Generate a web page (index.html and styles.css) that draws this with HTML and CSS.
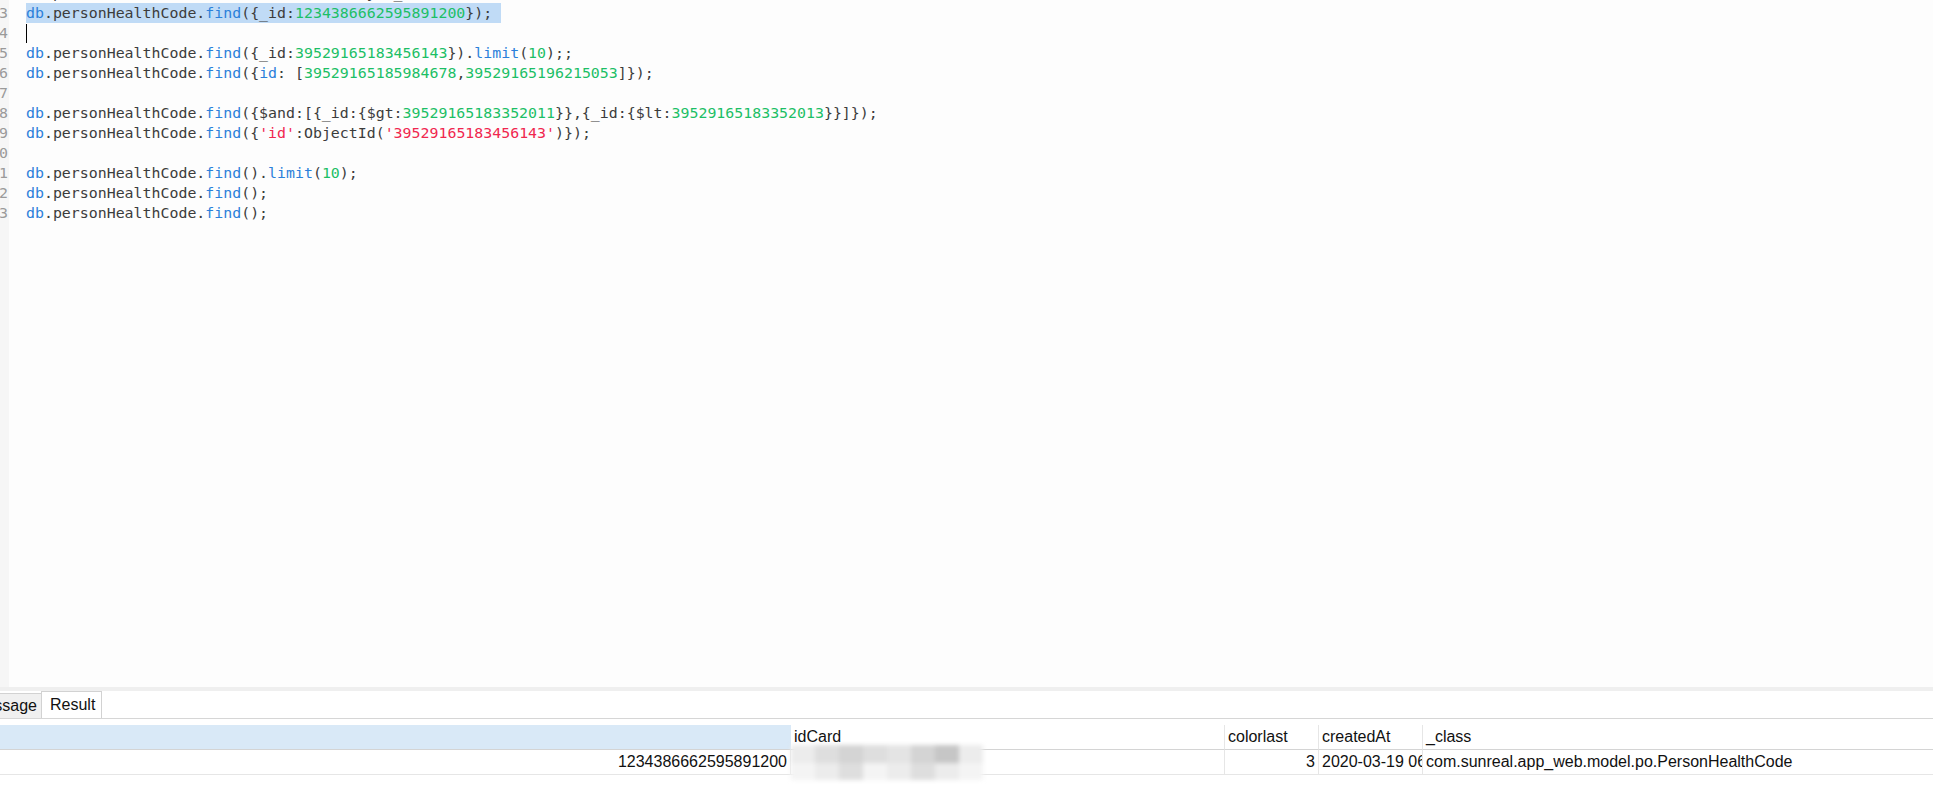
FILE: index.html
```html
<!DOCTYPE html>
<html lang="en">
<head>
  <meta charset="UTF-8" />
  <title>personHealthCode query</title>
  <link rel="stylesheet" href="styles.css">
</head>
<body>
  <div class="editor">
    <div class="gutter">
      <div>2</div><div>3</div><div>4</div><div>5</div><div>6</div><div>7</div>
      <div>8</div><div>9</div><div>10</div><div>11</div><div>12</div><div>13</div>
    </div>
    <div class="code">
      <div class="line"><span class="k">db</span>.personHealthCode.<span class="k">find</span>.remove.countBy({_id:{<span class="n">12343866</span>}});</div>
      <div class="line"><span class="sel"><span class="k">db</span>.personHealthCode.<span class="k">find</span>({_id:<span class="n">1234386662595891200</span>});</span></div>
      <div class="line"><span class="caret"></span></div>
      <div class="line"><span class="k">db</span>.personHealthCode.<span class="k">find</span>({_id:<span class="n">39529165183456143</span>}).<span class="k">limit</span>(<span class="n">10</span>);;</div>
      <div class="line"><span class="k">db</span>.personHealthCode.<span class="k">find</span>({<span class="k">id</span>: [<span class="n">39529165185984678</span>,<span class="n">39529165196215053</span>]});</div>
      <div class="line"></div>
      <div class="line"><span class="k">db</span>.personHealthCode.<span class="k">find</span>({$and:[{_id:{$gt:<span class="n">39529165183352011</span>}},{_id:{$lt:<span class="n">39529165183352013</span>}}]});</div>
      <div class="line"><span class="k">db</span>.personHealthCode.<span class="k">find</span>({<span class="s">'id'</span>:ObjectId(<span class="s">'39529165183456143'</span>)});</div>
      <div class="line"></div>
      <div class="line"><span class="k">db</span>.personHealthCode.<span class="k">find</span>().<span class="k">limit</span>(<span class="n">10</span>);</div>
      <div class="line"><span class="k">db</span>.personHealthCode.<span class="k">find</span>();</div>
      <div class="line"><span class="k">db</span>.personHealthCode.<span class="k">find</span>();</div>
    </div>
  </div>

  <div class="splitter"></div>

  <div class="tabs">
    <div class="tab">Message</div>
    <div class="tab active">Result</div>
  </div>

  <div class="grid">
    <div class="cell head selected"></div>
    <div class="cell head">idCard</div>
    <div class="cell head">colorlast</div>
    <div class="cell head">createdAt</div>
    <div class="cell head last">_class</div>

    <div class="cell num">1234386662595891200</div>
    <div class="cell idcard">
      <div class="mosaic">
        <span class="m1"></span><span class="m2"></span><span class="m3"></span><span class="m2"></span>
        <span class="m4"></span><span class="m3"></span><span class="m5"></span><span class="m1"></span>
        <span class="m6"></span><span class="m1"></span><span class="m2"></span><span class="m6"></span>
        <span class="m1"></span><span class="m2"></span><span class="m1"></span><span class="m6"></span>
      </div>
    </div>
    <div class="cell num">3</div>
    <div class="cell">2020-03-19 06:21:08</div>
    <div class="cell last">com.sunreal.app_web.model.po.PersonHealthCode</div>
  </div>
</body>
</html>
```

FILE: styles.css
```css
html, body {
  margin: 0;
  padding: 0;
}
body {
  width: 1933px;
  height: 807px;
  overflow: hidden;
  background: #ffffff;
  font-family: 'Liberation Sans', Arial, sans-serif;
  font-size: 16px;
  color: #111;
}

/* query editor */
.editor {
  display: flex;
  height: 687px;
  overflow: hidden;
  background: #fdfdfd;
  font-family: 'DejaVu Sans Mono', 'Liberation Mono', monospace;
  font-size: 14.9px;
  color: #3c3c3c;
}
.gutter {
  flex: none;
  width: 41px;
  margin-left: -33px;
  margin-top: -17px;
  padding-right: 1px;
  text-align: right;
  background: #f6f6f6;
  color: #9a9a9a;
  line-height: 20px;
}
.code {
  flex: 1;
  margin-top: -17px;
  padding-left: 17px;
}
.line {
  height: 20px;
  line-height: 20px;
  white-space: pre;
}
.sel {
  display: inline-block;
  padding-right: 9px;
  background: #c0dbf6;
}
.caret {
  display: inline-block;
  width: 1px;
  height: 19px;
  margin-top: 1px;
  vertical-align: top;
  background: #000;
}
.k { color: #2b80da; }
.n { color: #1cbf66; }
.s { color: #f0274f; }

.splitter {
  height: 4px;
  background: #efefef;
}

/* result tabs */
.tabs {
  display: flex;
  align-items: flex-end;
  height: 28px;
  box-sizing: border-box;
  border-bottom: 1px solid #d6d6d6;
  margin-bottom: 6px;
}
.tab {
  box-sizing: border-box;
  height: 25px;
  line-height: 24px;
  padding: 0 4px 0 8px;
  background: #f0f0f0;
  border: 1px solid #d2d2d2;
  border-bottom: none;
  border-right: none;
}
.tab:first-child {
  width: 79px;
  margin-left: -38px;
  text-align: right;
}
.tab.active {
  height: 27px;
  line-height: 25px;
  width: 61px;
  padding: 0 0 0 8px;
  background: #ffffff;
  border-right: 1px solid #d2d2d2;
}

/* result grid */
.grid {
  display: grid;
  grid-template-columns: 791px 434px 94px 104px 1fr;
}
.cell {
  position: relative;
  box-sizing: border-box;
  height: 25px;
  line-height: 24px;
  padding: 0 3px;
  white-space: nowrap;
  overflow: hidden;
  border-right: 1px solid #e6e6e6;
  border-bottom: 1px solid #e6e6e6;
}
.cell.head {
  border-bottom-color: #d4d4d4;
}
.cell.selected {
  background: #d9e9f7;
  border-right-color: #d9e9f7;
}
.cell.last {
  border-right: none;
}
.cell.num {
  text-align: right;
}
.cell.idcard {
  overflow: visible;
}
.mosaic {
  position: absolute;
  left: 0;
  top: -5px;
  width: 192px;
  height: 35px;
  display: grid;
  grid-template-columns: repeat(8, 1fr);
  grid-template-rows: 1fr 1fr;
  filter: blur(2px);
}
.m1 { background: #ececec; }
.m2 { background: #dedede; }
.m3 { background: #d4d4d4; }
.m4 { background: #e4e4e4; }
.m5 { background: #c6c6c6; }
.m6 { background: #f4f4f4; }
```
